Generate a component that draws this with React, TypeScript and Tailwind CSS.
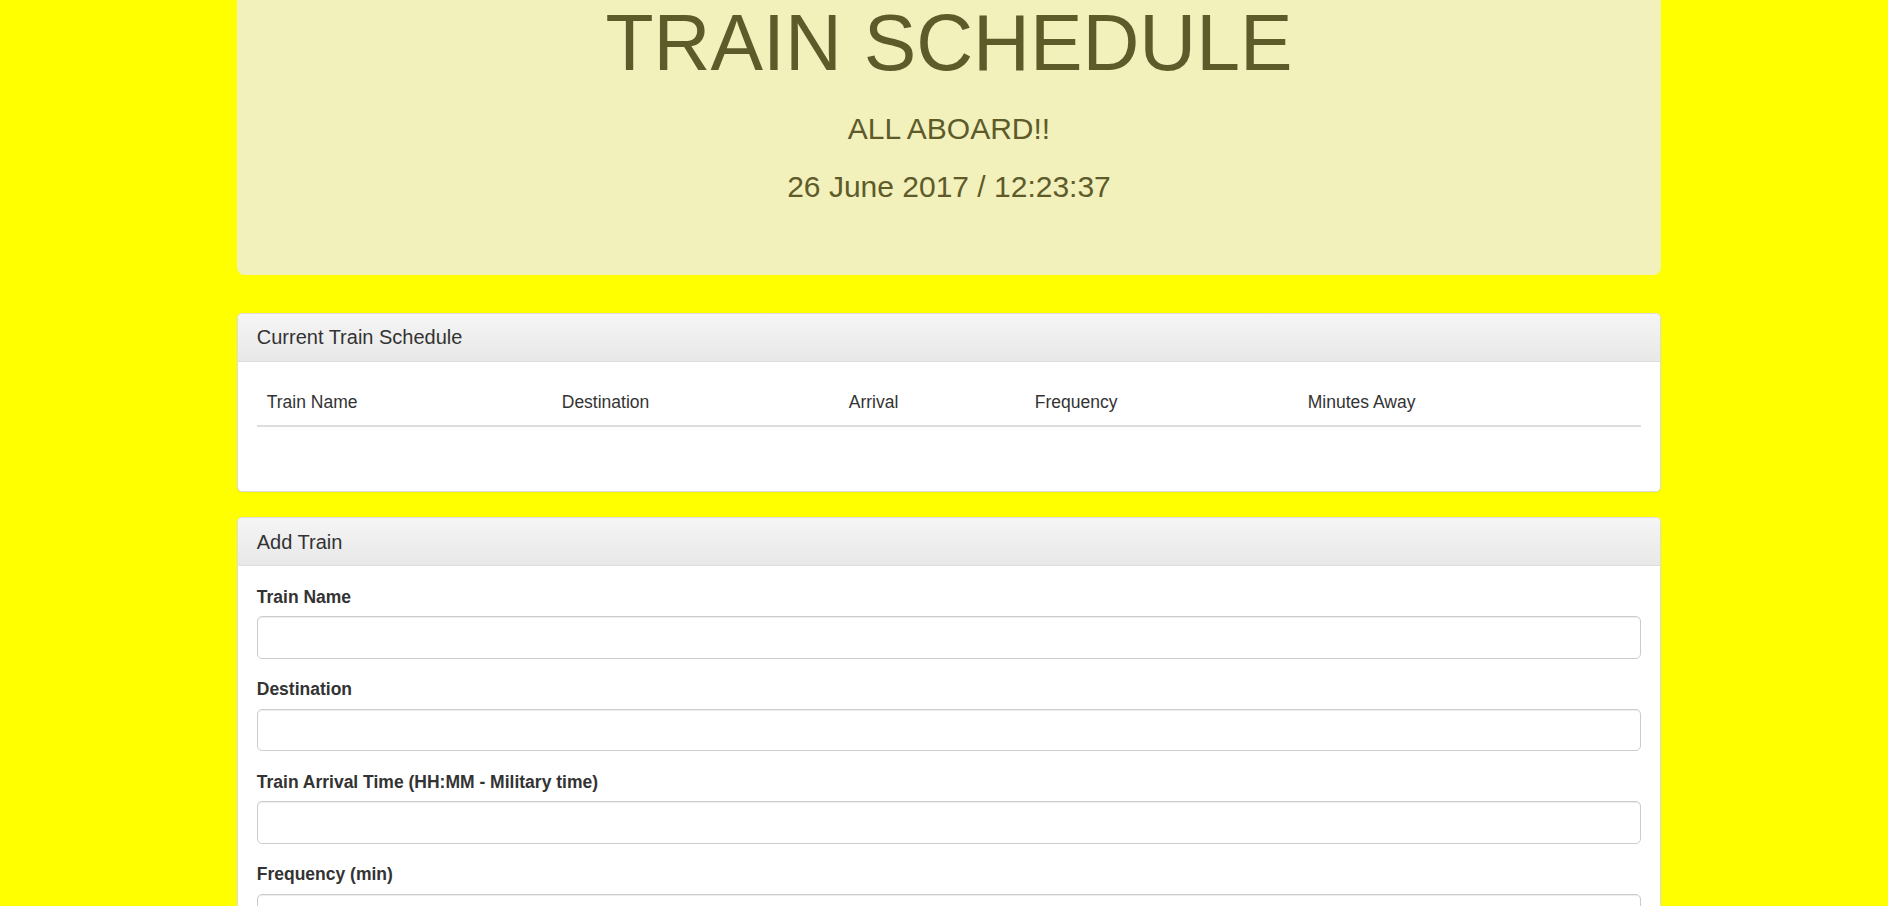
export default function App() {
  const columns = [
    { label: "Train Name", width: "w-[295px]" },
    { label: "Destination", width: "w-[287px]" },
    { label: "Arrival", width: "w-[186px]" },
    { label: "Frequency", width: "w-[273px]" },
    { label: "Minutes Away", width: "" },
  ];

  const fields = [
    { id: "train-name", label: "Train Name" },
    { id: "destination", label: "Destination" },
    { id: "first-train", label: "Train Arrival Time (HH:MM - Military time)" },
    { id: "frequency", label: "Frequency (min)" },
  ];

  return (
    <div className="min-h-screen bg-[#ffff00] font-['Liberation_Sans',Arial,sans-serif] text-[17.5px] leading-[25px] text-[#333]">
      <div className="ml-[237px] w-[1424px] pb-10">
        {/* header */}
        <div className="rounded-b-[7.5px] bg-[#f2f0bb] pb-[60px] text-center text-[#5e5b2b]">
          <h1 className="text-[78.75px] leading-[1.1]">TRAIN SCHEDULE</h1>
          <h3 className="mt-[25px] text-[30px] leading-[1.1]">ALL ABOARD!!</h3>
          <h3 className="mt-[25px] mb-[12.5px] text-[30px] leading-[1.1]">26 June 2017 / 12:23:37</h3>
        </div>

        {/* schedule */}
        <div className="mt-[37.5px] overflow-hidden rounded-[5px] border border-[#ddd] bg-white shadow-[0_1px_2px_rgba(0,0,0,0.05)]">
          <div className="border-b border-[#ddd] bg-gradient-to-b from-[#f5f5f5] to-[#e8e8e8] px-[18.75px] py-[12.5px] text-[20px] leading-[22px] text-[#333]">
            Current Train Schedule
          </div>
          <div className="p-[18.75px]">
            <table className="mb-[44.5px] w-full border-collapse">
              <thead>
                <tr className="border-b-[2.5px] border-[#ddd]">
                  {columns.map((c) => (
                    <th key={c.label} className={`${c.width} p-[10px] text-left font-normal`}>
                      {c.label}
                    </th>
                  ))}
                </tr>
              </thead>
              <tbody />
            </table>
          </div>
        </div>

        {/* add train */}
        <div className="mt-[25.5px] overflow-hidden rounded-[5px] border border-[#ddd] bg-white shadow-[0_1px_2px_rgba(0,0,0,0.05)]">
          <div className="border-b border-[#ddd] bg-gradient-to-b from-[#f5f5f5] to-[#e8e8e8] px-[18.75px] py-[12.5px] text-[20px] leading-[22px] text-[#333]">
            Add Train
          </div>
          <form className="p-[18.75px]">
            {fields.map((f) => (
              <div key={f.id} className="mb-[18.75px]">
                <label htmlFor={f.id} className="mb-[6.25px] block font-bold">
                  {f.label}
                </label>
                <input
                  id={f.id}
                  type="text"
                  className="block h-[42.5px] w-full rounded-[5px] border border-[#ccc] bg-white px-[15px] shadow-[inset_0_1px_1px_rgba(0,0,0,0.075)] outline-none"
                />
              </div>
            ))}
            <button
              type="button"
              className="rounded-[5px] border border-[#2e6da4] bg-gradient-to-b from-[#337ab7] to-[#265a88] px-[15px] py-[7.5px] text-white"
            >
              Submit
            </button>
          </form>
        </div>
      </div>
    </div>
  );
}
